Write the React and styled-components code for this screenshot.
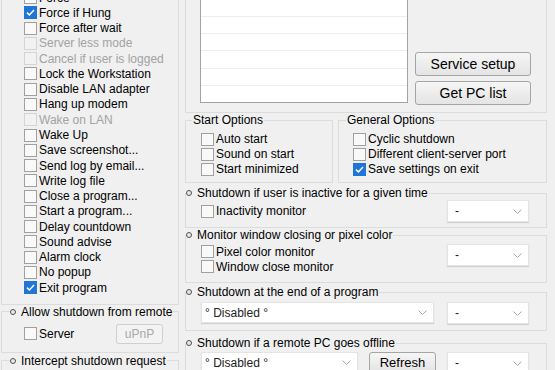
import React from "react";
import styled, { createGlobalStyle } from "styled-components";

const GlobalStyle = createGlobalStyle`
  html, body {
    margin: 0;
    padding: 0;
    background: #f0f0f0;
  }
  body {
    font-family: "Liberation Sans", Arial, sans-serif;
    font-size: 12px;
    color: #000;
  }
`;

const Window = styled.div`
  width: 555px;
  height: 370px;
  overflow: hidden;
  background: #f0f0f0;
`;

const Main = styled.div`
  display: flex;
  gap: 6px;
  padding-left: 1px;
  margin-top: -17px;
`;

const LeftColumn = styled.div`
  width: 178px;
  flex-shrink: 0;
  display: flex;
  flex-direction: column;
`;

const RightColumn = styled.div`
  width: 362px;
  flex-shrink: 0;
  display: flex;
  flex-direction: column;
`;

const Group = styled.fieldset`
  margin: ${(p) => p.$top || 0}px 0 0 0;
  padding: 0;
  border: 1px solid #dcdcdc;
  min-width: 0;
  box-sizing: border-box;
  width: ${(p) => (p.$width ? p.$width + "px" : "auto")};
  flex-shrink: 0;
`;

const Legend = styled.legend`
  margin-left: ${(p) => p.$indent || 0}px;
  padding: 0 1px 0 ${(p) => (p.$plain ? 1 : 0)}px;
  height: 14px;
  line-height: 14px;
  display: flex;
  align-items: center;
  gap: 5px;
  font-size: 12px;
  white-space: nowrap;
`;

const Bullet = styled.span`
  width: 6px;
  height: 6px;
  box-sizing: border-box;
  border: 1px solid #505050;
  border-radius: 50%;
  background: #e8e8e8;
`;

const Frame = styled.div`
  border: 1px solid #dcdcdc;
  padding: 8px 15px 7px 14px;
  display: flex;
  align-items: flex-end;
  gap: 7px;
`;

const ListBox = styled.div`
  width: 208px;
  height: 111px;
  margin-bottom: 2px;
  box-sizing: border-box;
  border: 1px solid #a3a3a3;
  background: #fff;
  display: flex;
  flex-direction: column;
  justify-content: flex-end;
  overflow: hidden;
`;

const ListRow = styled.div`
  height: 17.2px;
  flex-shrink: 0;
  box-sizing: border-box;
  border-top: 1px solid #ededed;
`;

const ButtonStack = styled.div`
  display: flex;
  flex-direction: column;
  gap: 5px;
`;

const PushButton = styled.button`
  width: ${(p) => p.$width}px;
  height: ${(p) => p.$height}px;
  box-sizing: border-box;
  padding: 0;
  border: 1px solid ${(p) => (p.disabled ? "#cfcfcf" : "#a5a5a5")};
  border-radius: 3px;
  background: ${(p) =>
    p.disabled ? "#f3f3f3" : "linear-gradient(#f6f6f6, #e4e4e4)"};
  color: ${(p) => (p.disabled ? "#a8a8a8" : "#000")};
  font-family: "Liberation Sans", Arial, sans-serif;
  font-size: ${(p) => p.$size || 12}px;
  flex-shrink: 0;
`;

const OptionsRow = styled.div`
  display: flex;
  gap: 5px;
`;

const Body = styled.div`
  display: flex;
  align-items: ${(p) => p.$align || "flex-start"};
  justify-content: ${(p) => (p.$spread ? "space-between" : "flex-start")};
  gap: ${(p) => p.$gap || 0}px;
  min-height: ${(p) => p.$minH || 0}px;
  padding: ${(p) => p.$pt || 0}px ${(p) => p.$pr || 0}px
    ${(p) => p.$pb || 0}px ${(p) => p.$pl ?? 15}px;
`;

const CheckList = styled.div`
  display: flex;
  flex-direction: column;
  padding: ${(p) => p.$pt || 0}px 0 ${(p) => p.$pb || 0}px
    ${(p) => p.$pl ?? 15}px;
`;

const CheckRow = styled.label`
  display: flex;
  align-items: center;
  height: ${(p) => p.$h || 15}px;
  flex-shrink: 0;
  color: ${(p) => (p.$disabled ? "#a2a2a2" : "#000")};
  white-space: nowrap;
`;

const Box = styled.span`
  width: 13px;
  height: 13px;
  box-sizing: border-box;
  margin-right: 2px;
  flex-shrink: 0;
  display: flex;
  align-items: center;
  justify-content: center;
  border: 1px solid
    ${(p) => (p.$checked ? "#1f76d6" : p.$disabled ? "#d4d4d4" : "#a0a0a0")};
  background: ${(p) =>
    p.$checked ? "#1f76d6" : p.$disabled ? "#f2f2f2" : "#f9f9f9"};
`;

const Select = styled.div`
  width: ${(p) => (p.$width ? p.$width + "px" : "auto")};
  flex: ${(p) => (p.$width ? "none" : "1")};
  height: ${(p) => p.$height || 22}px;
  box-sizing: border-box;
  display: flex;
  align-items: center;
  justify-content: space-between;
  padding: 0 6px 0 ${(p) => p.$pl || 7}px;
  background: #fff;
  border: 1px solid #e4e4e4;
  box-shadow: 0 1px 1px rgba(0, 0, 0, 0.12);
  color: #222;
`;

function Check({ label, checked, disabled, h }) {
  return (
    <CheckRow $disabled={disabled} $h={h}>
      <Box $checked={checked} $disabled={disabled}>
        {checked && (
          <svg width="11" height="11" viewBox="0 0 11 11">
            <path
              d="M2 5.6 L4.4 8 L9 3"
              fill="none"
              stroke="#fff"
              strokeWidth="1.5"
            />
          </svg>
        )}
      </Box>
      {label}
    </CheckRow>
  );
}

function Chevron() {
  return (
    <svg width="9" height="5" viewBox="0 0 9 5">
      <path d="M0.5 0.5 L4.5 4.5 L8.5 0.5" fill="none" stroke="#a8a8a8" />
    </svg>
  );
}

function Dropdown({ value, width, height, pl }) {
  return (
    <Select $width={width} $height={height} $pl={pl}>
      <span>{value}</span>
      <Chevron />
    </Select>
  );
}

const leftOptions = [
  { label: "Force" },
  { label: "Force if Hung", checked: true },
  { label: "Force after wait" },
  { label: "Server less mode", disabled: true },
  { label: "Cancel if user is logged", disabled: true },
  { label: "Lock the Workstation" },
  { label: "Disable LAN adapter" },
  { label: "Hang up modem" },
  { label: "Wake on LAN", disabled: true },
  { label: "Wake Up" },
  { label: "Save screenshot..." },
  { label: "Send log by email..." },
  { label: "Write log file" },
  { label: "Close a program..." },
  { label: "Start a program..." },
  { label: "Delay countdown" },
  { label: "Sound advise" },
  { label: "Alarm clock" },
  { label: "No popup" },
  { label: "Exit program", checked: true },
];

export default function App() {
  return (
    <Window>
      <GlobalStyle />
      <Main>
        <LeftColumn>
          <Group>
            <CheckList $pt={6} $pb={8.4} $pl={22}>
              {leftOptions.map((o) => (
                <Check key={o.label} {...o} h={15.28} />
              ))}
            </CheckList>
          </Group>

          <Group>
            <Legend $indent={8}>
              <Bullet />
              Allow shutdown from remote
            </Legend>
            <Body $pt={5} $pb={8} $pl={22} $pr={15} $align="center" $spread>
              <Check label="Server" />
              <PushButton $width={47} $height={20} disabled>
                uPnP
              </PushButton>
            </Body>
          </Group>

          <Group $top={1}>
            <Legend $indent={8}>
              <Bullet />
              Intercept shutdown request
            </Legend>
            <Body $minH={24} />
          </Group>
        </LeftColumn>

        <RightColumn>
          <Frame>
            <ListBox>
              {Array.from({ length: 7 }).map((_, i) => (
                <ListRow key={i} />
              ))}
            </ListBox>
            <ButtonStack>
              <PushButton $width={116} $height={24} $size={14}>
                Service setup
              </PushButton>
              <PushButton $width={116} $height={24} $size={14}>
                Get PC list
              </PushButton>
            </ButtonStack>
          </Frame>

          <OptionsRow>
            <Group $width={148}>
              <Legend $indent={6} $plain>
                Start Options
              </Legend>
              <CheckList $pt={4.5} $pb={5.5}>
                <Check label="Auto start" />
                <Check label="Sound on start" />
                <Check label="Start minimized" />
              </CheckList>
            </Group>
            <Group $width={209}>
              <Legend $indent={7} $plain>
                General Options
              </Legend>
              <CheckList $pt={4.5} $pb={5.5} $pl={14}>
                <Check label="Cyclic shutdown" />
                <Check label="Different client-server port" />
                <Check label="Save settings on exit" checked />
              </CheckList>
            </Group>
          </OptionsRow>

          <Group $top={3}>
            <Legend>
              <Bullet />
              Shutdown if user is inactive for a given time
            </Legend>
            <Body $pb={5} $pr={17} $align="center" $spread>
              <Check label="Inactivity monitor" />
              <Dropdown value="-" width={82} />
            </Body>
          </Group>

          <Group>
            <Legend>
              <Bullet />
              Monitor window closing or pixel color
            </Legend>
            <Body $pt={2} $pb={8} $pr={17} $spread>
              <CheckList $pl={0}>
                <Check label="Pixel color monitor" />
                <Check label="Window close monitor" />
              </CheckList>
              <Dropdown value="-" width={82} />
            </Body>
          </Group>

          <Group $top={2}>
            <Legend>
              <Bullet />
              Shutdown at the end of a program
            </Legend>
            <Body $pt={3} $pb={6} $pr={17} $gap={13}>
              <Dropdown value="° Disabled °" height={21} pl={3} />
              <Dropdown value="-" width={82} />
            </Body>
          </Group>

          <Group $top={5}>
            <Legend>
              <Bullet />
              Shutdown if a remote PC goes offline
            </Legend>
            <Body $pt={2} $pb={8} $pr={17} $gap={11}>
              <Dropdown value="° Disabled °" height={21} pl={3} />
              <PushButton $width={67} $height={21} $size={13}>
                Refresh
              </PushButton>
              <Dropdown value="-" width={82} />
            </Body>
          </Group>
        </RightColumn>
      </Main>
    </Window>
  );
}
